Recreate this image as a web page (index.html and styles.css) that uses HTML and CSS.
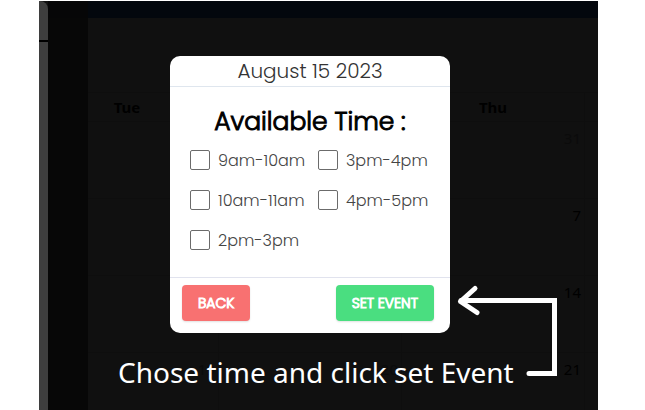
FILE: index.html
```html
<!DOCTYPE html>
<html lang="en">
<head>
<meta charset="utf-8">
<title>Set event</title>
<link rel="stylesheet" href="styles.css">
</head>
<body>
<main class="scene">
  <div class="topbar"></div>
  <div class="sidebar"><div class="sidebar-head"></div></div>
  <div class="gutter"></div>
  <section class="content">
    <table class="calendar">
      <thead><tr><th>Tue</th><th></th><th>Thu</th><th></th></tr></thead>
      <tbody>
        <tr><td></td><td></td><td class="muted">31</td><td></td></tr>
        <tr><td></td><td></td><td>7</td><td></td></tr>
        <tr><td></td><td></td><td>14</td><td></td></tr>
        <tr><td class="muted">19</td><td class="muted">20</td><td>21</td><td></td></tr>
      </tbody>
    </table>
  </section>
  <div class="overlay">
    <div class="stage">
      <form class="modal">
        <header class="modal-head">August 15 2023</header>
        <div class="modal-body">
          <h1>Available Time :</h1>
          <div class="slots">
            <label><input type="checkbox">9am-10am</label>
            <label><input type="checkbox">3pm-4pm</label>
            <label><input type="checkbox">10am-11am</label>
            <label><input type="checkbox">4pm-5pm</label>
            <label><input type="checkbox">2pm-3pm</label>
          </div>
        </div>
        <footer class="modal-foot">
          <button type="button" class="btn back">BACK</button>
          <button type="button" class="btn set">SET EVENT</button>
        </footer>
      </form>
      <svg class="arrow" width="104" height="96" viewBox="456 283 104 96" aria-hidden="true">
        <path d="M461 300.500H554.500V373.500H529" stroke-linejoin="miter"/>
        <path d="M475 288.500L460.500 301.500L477 312.500"/>
      </svg>
      <p class="caption">Chose time and click set Event</p>
    </div>
  </div>
</main>
</body>
</html>
```
FILE: styles.css
```css
* { box-sizing: border-box; }
body {
  margin: 0;
  background: #fff;
  font-family: Poppins, Inter, sans-serif;
}
.scene {
  position: relative;
  display: grid;
  grid-template: 17px 1fr / 9px 40px 1fr;
  height: calc(100vh - 1px);
  margin: 1px 47px 0 39px;
  overflow: hidden;
  background: #101010;
}
.topbar { grid-area: 1 / 2 / 2 / 4; background: #03070d; }
.sidebar {
  grid-area: 1 / 1 / 3 / 2;
  background: #3e3e3e;
  border-top-right-radius: 8px;
}
.sidebar-head { height: 41px; border-bottom: 2px solid #000; }
.gutter { grid-area: 1 / 2 / 3 / 3; background: rgba(7, 7, 7, 0.9); }
.content { grid-area: 2 / 3; overflow: hidden; padding-top: 74px; }
.calendar {
  width: 733px;
  margin-left: -53px;
  table-layout: fixed;
  border-collapse: collapse;
  font: 15px/20px "Noto Sans", sans-serif;
  color: #000;
}
.calendar th, .calendar td { border: 1px solid #0e0e0e; }
.calendar th { height: 29px; padding: 0; }
.calendar td {
  height: 77px;
  padding: 6px 3px;
  text-align: right;
  vertical-align: top;
}
.calendar .muted { color: #0b0b0b; }
.overlay {
  position: absolute;
  inset: 0;
  display: flex;
  justify-content: center;
  align-items: flex-start;
  padding: 55px 17px 0 0;
}
.stage { position: relative; width: 280px; }
.modal {
  overflow: hidden;
  background: #fff;
  border-radius: 10px;
  color: #444;
  font-weight: 300;
}
.modal-head {
  border-bottom: 1px solid #dfe6ee;
  color: #333;
  font-size: 20px;
  line-height: 30px;
  text-align: center;
}
.modal-body { padding: 17px 20px; }
h1 {
  margin: 0;
  color: #000;
  font-size: 25px;
  font-weight: 300;
  line-height: 36px;
  text-align: center;
  -webkit-text-stroke: 1px #000;
}
.slots { display: grid; grid-template-columns: repeat(2, minmax(0, 1fr)); column-gap: 16px; }
.slots label {
  display: flex;
  align-items: center;
  gap: 8px;
  height: 40px;
  font-size: 16px;
  white-space: nowrap;
}
.slots input {
  appearance: none;
  flex: none;
  width: 20px;
  height: 20px;
  margin: 0;
  border: 1px solid #6b6b6b;
  border-radius: 2px;
}
.modal-foot {
  display: flex;
  justify-content: space-between;
  padding: 7px 16px 12px 12px;
  border-top: 1px solid #e1e3ee;
}
.btn {
  height: 36px;
  padding: 0 16px;
  border: 0;
  border-radius: 4px;
  box-shadow: 0 1px 2px rgba(0, 0, 0, 0.12);
  color: #fff;
  font: 300 14px/20px Poppins, Inter, sans-serif;
  -webkit-text-stroke: 1px #fff;
}
.back { background: #f87171; }
.set { background: #4ade80; }
.arrow {
  position: absolute;
  top: 227px;
  left: 286px;
  fill: none;
  stroke: #fff;
  stroke-width: 5;
  stroke-linecap: round;
  stroke-linejoin: round;
}
.caption {
  position: absolute;
  top: 297px;
  left: -52px;
  margin: 0;
  color: #fff;
  font: 28px/38px "Noto Sans", sans-serif;
  white-space: nowrap;
}
```
